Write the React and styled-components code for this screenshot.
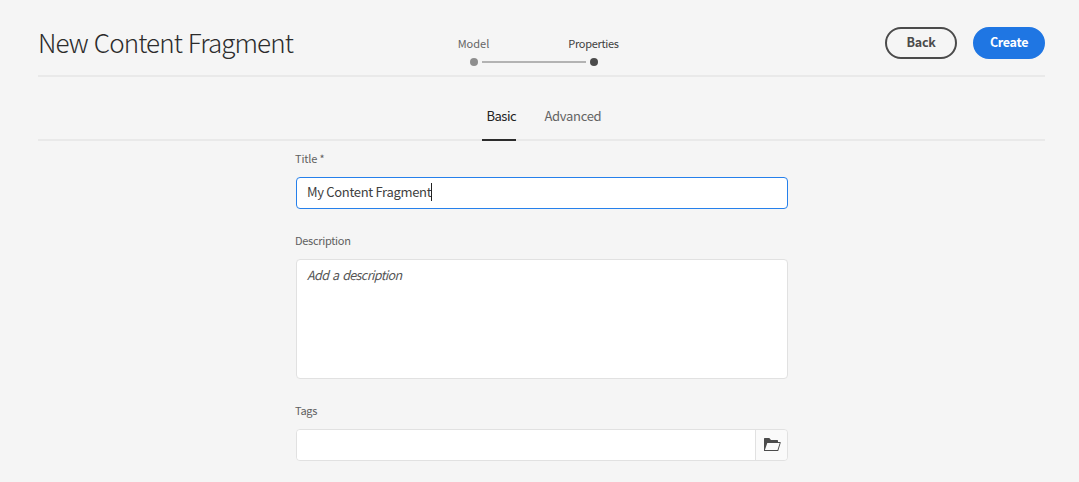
import React from 'react';
import styled, { createGlobalStyle } from 'styled-components';

const GlobalStyle = createGlobalStyle`
  * { box-sizing: border-box; }
  body {
    margin: 0;
    background: #f5f5f5;
    color: #4b4b4b;
    font-family: "Noto Sans CJK SC", "Noto Sans", sans-serif;
    font-weight: 400;
  }
  button, input, textarea { font: inherit; }
`;

const Page = styled.main`
  height: 482px;
  padding: 0 34px 0 38px;
  overflow: hidden;
`;

const Header = styled.header`
  height: 77px;
  border-bottom: 2px solid #e9e9e9;
  display: grid;
  grid-template-columns: 407px 1fr auto;
  align-items: start;
`;

const Heading = styled.h1`
  margin: 22px 0 0;
  font-size: 26px;
  line-height: 40px;
  font-weight: 300;
  letter-spacing: -0.9px;
  word-spacing: 1px;
  color: #2c2c2c;
  white-space: nowrap;
`;

const Steps = styled.ol`
  list-style: none;
  margin: 36px 0 0;
  padding: 0;
  display: flex;
`;

const Step = styled.li`
  width: ${(p) => (p.$last ? '60px' : '120px')};
  color: ${(p) => (p.$last ? '#3e3e3e' : '#646464')};
`;

const StepLabel = styled.span`
  display: flex;
  justify-content: center;
  width: 57px;
  font-size: 11px;
  line-height: 15px;
  letter-spacing: ${(p) => p.$spacing || '0'};
`;

const StepTrack = styled.div`
  display: flex;
  align-items: center;
  gap: 4px;
  margin-top: 7px;
  padding-left: 25px;
  height: 8px;
`;

const Dot = styled.i`
  width: 8px;
  height: 8px;
  flex: none;
  border-radius: 50%;
  background: ${(p) => (p.$current ? '#4b4b4b' : '#8e8e8e')};
`;

const Connector = styled.i`
  width: 104px;
  height: 2px;
  flex: none;
  background: #b3b3b3;
`;

const Actions = styled.div`
  display: flex;
  gap: 16px;
  margin-top: 27px;
`;

const Button = styled.button`
  width: 72px;
  height: 32px;
  padding: 0 0 2px;
  border: 2px solid ${(p) => (p.$primary ? '#1f76e3' : '#4b4b4b')};
  border-radius: 16px;
  background: ${(p) => (p.$primary ? '#1f76e3' : 'transparent')};
  color: ${(p) => (p.$primary ? '#fff' : '#4b4b4b')};
  font-size: 12.5px;
  line-height: 20px;
  font-weight: 700;
  letter-spacing: -0.3px;
`;

const Tabs = styled.nav`
  height: 64px;
  border-bottom: 2px solid #e9e9e9;
  display: flex;
  align-items: flex-end;
  gap: 24px;
  padding-left: 444px;
`;

const Tab = styled.span`
  height: 38px;
  margin-bottom: -2px;
  padding: 3px 0 0 4.500px;
  border-bottom: 2px solid ${(p) => (p.$selected ? '#2c2c2c' : 'transparent')};
  width: ${(p) => p.$width};
  white-space: nowrap;
  font-size: 13px;
  line-height: 20px;
  letter-spacing: ${(p) => p.$spacing || '0'};
  color: ${(p) => (p.$selected ? '#222' : '#646464')};
`;

const Form = styled.form`
  width: 493px;
  margin-left: 257px;
  padding-top: 9px;
`;

const Field = styled.div`
  display: flex;
  flex-direction: column;
  margin-bottom: 23px;
`;

const Label = styled.label`
  height: 27px;
  font-size: 11px;
  line-height: 16px;
  letter-spacing: ${(p) => p.$spacing || '0'};
  color: #606060;
`;

const Control = styled.div`
  display: flex;
  align-items: flex-start;
  height: ${(p) => p.$height || '32px'};
  margin-left: 1px;
  padding: 5px 10px;
  border: 1px solid ${(p) => (p.$focused ? '#2680eb' : '#e1e1e1')};
  border-radius: 4px;
  background: #fff;
  font-size: 13px;
  line-height: 20px;
  white-space: nowrap;
`;

const Value = styled.span`
  margin-top: -1px;
  letter-spacing: -0.32px;
  color: #3e3e3e;
`;

const Caret = styled.i`
  width: 1px;
  height: 18px;
  background: #222;
`;

const Placeholder = styled.span`
  font-style: italic;
  font-size: 12.5px;
  letter-spacing: -0.6px;
  word-spacing: 1.5px;
  color: #555;
`;

const TagRow = styled.div`
  display: flex;
  height: 32px;
  margin-left: 1px;
  border: 1px solid #e1e1e1;
  border-radius: 4px;
  overflow: hidden;
`;

const TagInput = styled.div`
  flex: 1;
  background: #fff;
`;

const PickerButton = styled.button`
  width: 32px;
  padding: 0;
  border: 0;
  border-left: 1px solid #e1e1e1;
  background: #fafafa;
  display: flex;
  align-items: center;
  justify-content: center;
`;

const FolderIcon = () => (
  <svg width="18" height="14" viewBox="0 0 18 14" fill="#4b4b4b" aria-hidden="true">
    <path
      fillRule="evenodd"
      d="M1 13V1.100C1 .5 1.200 0 1.800 0h4.200c.3 0 .5.1.7.400L8 2h6.300c.5 0 .7.200.7.700V4h2.200c.5 0 .700.300.5.8L15.200 13zM4.300 5 1.900 12.100h12.600L16.700 5z"
    />
  </svg>
);

export default function App() {
  return (
    <>
      <GlobalStyle />
      <Page>
        <Header>
          <Heading>New Content Fragment</Heading>
          <Steps>
            <Step>
              <StepLabel>Model</StepLabel>
              <StepTrack>
                <Dot />
                <Connector />
              </StepTrack>
            </Step>
            <Step $last>
              <StepLabel $spacing="-0.3px">Properties</StepLabel>
              <StepTrack>
                <Dot $current />
              </StepTrack>
            </Step>
          </Steps>
          <Actions>
            <Button>Back</Button>
            <Button $primary>Create</Button>
          </Actions>
        </Header>
        <Tabs>
          <Tab $selected $width="34px" $spacing="-0.5px">Basic</Tab>
          <Tab $width="64px" $spacing="-0.3px">Advanced</Tab>
        </Tabs>
        <Form>
          <Field>
            <Label $spacing="-0.15px">Title *</Label>
            <Control $focused>
              <Value>My Content Fragment</Value>
              <Caret />
            </Control>
          </Field>
          <Field>
            <Label $spacing="-0.3px">Description</Label>
            <Control $height="120px">
              <Placeholder>Add a description</Placeholder>
            </Control>
          </Field>
          <Field>
            <Label $spacing="-0.3px">Tags</Label>
            <TagRow>
              <TagInput />
              <PickerButton type="button" aria-label="Browse tags">
                <FolderIcon />
              </PickerButton>
            </TagRow>
          </Field>
        </Form>
      </Page>
    </>
  );
}
